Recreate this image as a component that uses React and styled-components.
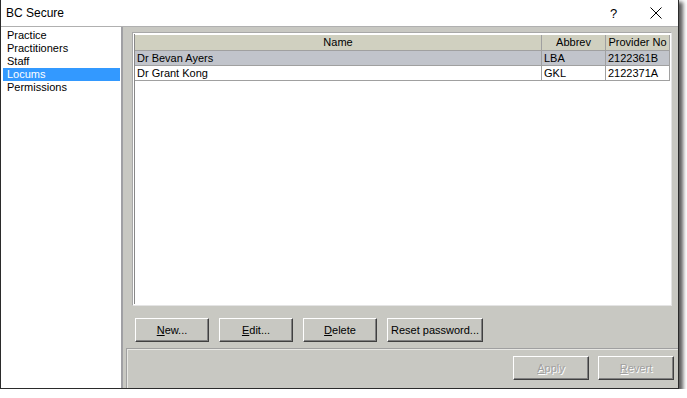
import React from 'react';
import styled, { createGlobalStyle } from 'styled-components';

const Global = createGlobalStyle`
  body {
    margin: 0;
    background: #ffffff;
    font-family: "Liberation Sans", Arial, sans-serif;
  }
`;

const Window = styled.div`
  box-sizing: border-box;
  width: 679px;
  height: 389px;
  display: flex;
  flex-direction: column;
  border-left: 1px solid #2b2b2b;
  border-right: 1px solid #2b2b2b;
  border-bottom: 1px solid #2b2b2b;
  box-shadow: 3px 3px 4px 1px rgba(0, 0, 0, 0.65);
  background: #ffffff;
`;

const TitleBar = styled.div`
  box-sizing: border-box;
  height: 27px;
  display: flex;
  align-items: center;
  padding-left: 5px;
  border-bottom: 1px solid #b0b0b0;
`;

const Title = styled.div`
  flex: 1;
  font-size: 12px;
  color: #000;
  padding-bottom: 1px;
`;

const Help = styled.div`
  width: 12px;
  font-size: 13px;
  color: #000;
  margin-right: 28px;
`;

const CloseBox = styled.div`
  width: 12px;
  height: 12px;
  margin-right: 16px;
  display: flex;
`;

const Body = styled.div`
  flex: 1;
  display: flex;
  min-height: 0;
`;

const Sidebar = styled.div`
  box-sizing: border-box;
  width: 123px;
  padding: 2px 1px 0 2px;
  background: #fff;
  border-right: 2px solid #a0a0a4;
  display: flex;
  flex-direction: column;
`;

const NavItem = styled.div`
  height: 13px;
  line-height: 13px;
  font-size: 11px;
  padding-left: 4px;
  background: ${p => (p.$active ? '#3399ff' : 'transparent')};
  color: ${p => (p.$active ? '#ffffff' : '#000000')};
`;

const Main = styled.div`
  flex: 1;
  display: flex;
  flex-direction: column;
  background: #c8c8c2;
`;

const Content = styled.div`
  padding: 5px 6px 0 9px;
  display: flex;
  flex-direction: column;
`;

const Grid = styled.div`
  box-sizing: border-box;
  height: 274px;
  background: #fff;
  border: 1px solid #a8a8a8;
  border-right-color: #e4e4e4;
  border-bottom-color: #e4e4e4;
  padding: 1px;
`;

const GridInner = styled.div`
  height: 100%;
  background: #fff;
  border-left: 1px solid #888;
  display: flex;
  flex-direction: column;
`;

const Row = styled.div`
  display: grid;
  grid-template-columns: 407px 64px 64px;
  height: 14px;
  background: ${p => p.$bg};
  border-bottom: 1px solid #a0a0a0;
`;

const HeadRow = styled(Row)`
  height: 15px;
  margin-top: 1px;
`;

const Cell = styled.div`
  font-size: 11px;
  line-height: 14px;
  padding-left: ${p => (p.$head ? '0' : '2px')};
  text-align: ${p => (p.$head ? 'center' : 'left')};
  border-right: 1px solid #a0a0a0;
  white-space: nowrap;
  overflow: hidden;
  color: #000;
`;

const ButtonRow = styled.div`
  display: flex;
  gap: 10px;
  padding: 12px 0 0 3px;
  height: 24px;
`;

const Button = styled.button`
  box-sizing: border-box;
  width: ${p => p.$w || 74}px;
  height: 24px;
  padding: 0;
  font-family: "Liberation Sans", Arial, sans-serif;
  font-size: 11px;
  background: #c8c8c2;
  color: ${p => (p.disabled ? '#a0a0a0' : '#000')};
  text-shadow: ${p => (p.disabled ? '1px 1px 0 #ffffff' : 'none')};
  border: 1px solid;
  border-color: #ffffff #404040 #404040 #ffffff;
  box-shadow: inset -1px -1px 0 #808080;
  u { text-decoration: underline; }
`;

const Footer = styled.div`
  flex: 1;
  margin-top: 6px;
  margin-left: 3px;
  border-top: 1px solid #a0a0a0;
  border-left: 1px solid #a0a0a0;
  box-shadow: inset 1px 1px 0 #e8e8e4;
  display: flex;
  justify-content: flex-end;
  align-items: flex-start;
  gap: 9px;
  padding: 7px 4px 0 0;
`;

const nav = ['Practice', 'Practitioners', 'Staff', 'Locums', 'Permissions'];

const rows = [
  { name: 'Dr Bevan Ayers', abbr: 'LBA', no: '2122361B', bg: '#c1c4cb' },
  { name: 'Dr Grant Kong', abbr: 'GKL', no: '2122371A', bg: '#ffffff' },
];

export default function App() {
  return (
    <>
      <Global />
      <Window>
        <TitleBar>
          <Title>BC Secure</Title>
          <Help>?</Help>
          <CloseBox>
            <svg width="12" height="12" viewBox="0 0 12 12">
              <path d="M0.5 0.5 L11.5 11.5 M11.5 0.5 L0.5 11.5" stroke="#000" strokeWidth="1" fill="none" />
            </svg>
          </CloseBox>
        </TitleBar>
        <Body>
          <Sidebar>
            {nav.map(n => (
              <NavItem key={n} $active={n === 'Locums'}>{n}</NavItem>
            ))}
          </Sidebar>
          <Main>
            <Content>
              <Grid>
                <GridInner>
                  <HeadRow $bg="#d0d0c0">
                    <Cell $head>Name</Cell>
                    <Cell $head>Abbrev</Cell>
                    <Cell $head>Provider No</Cell>
                  </HeadRow>
                  {rows.map(r => (
                    <Row key={r.abbr} $bg={r.bg}>
                      <Cell>{r.name}</Cell>
                      <Cell>{r.abbr}</Cell>
                      <Cell>{r.no}</Cell>
                    </Row>
                  ))}
                </GridInner>
              </Grid>
              <ButtonRow>
                <Button><u>N</u>ew...</Button>
                <Button><u>E</u>dit...</Button>
                <Button><u>D</u>elete</Button>
                <Button $w={96}>Reset password...</Button>
              </ButtonRow>
            </Content>
            <Footer>
              <Button $w={76} disabled><u>A</u>pply</Button>
              <Button $w={76} disabled><u>R</u>evert</Button>
            </Footer>
          </Main>
        </Body>
      </Window>
    </>
  );
}
